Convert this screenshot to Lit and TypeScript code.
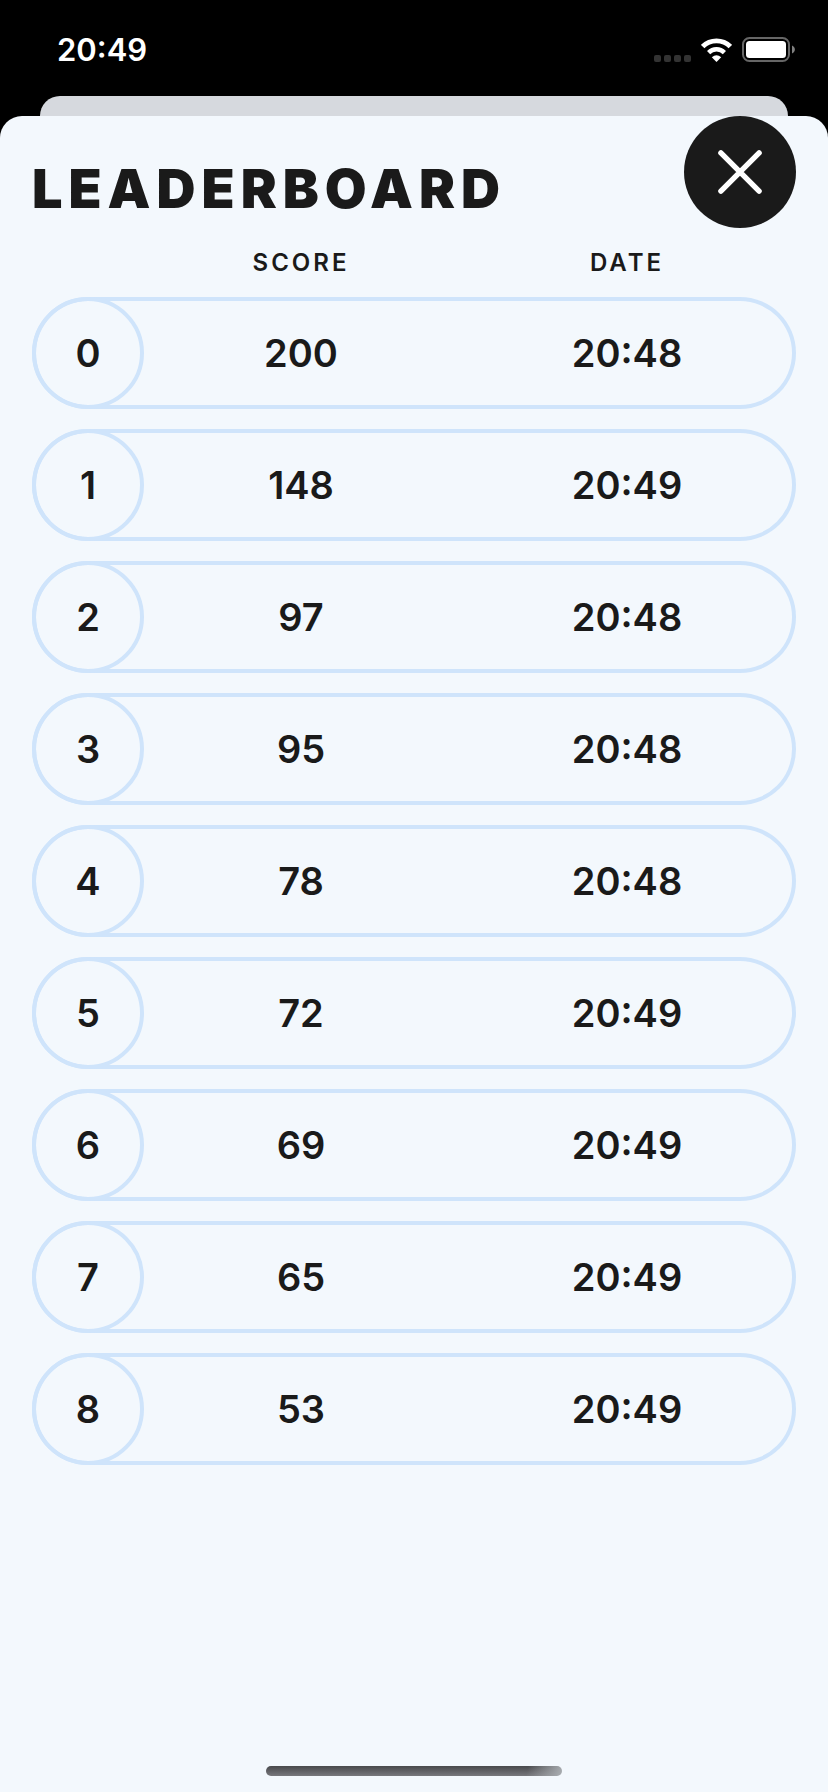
import { LitElement, html, css } from "lit";
import { customElement, state } from "lit/decorators.js";

interface Entry {
  score: number;
  date: string;
}

@customElement("status-bar")
class StatusBar extends LitElement {
  static styles = css`
    :host {
      display: flex;
      align-items: center;
      justify-content: space-between;
      height: 96px;
      padding: 3px 33px 0 57px;
      box-sizing: border-box;
      color: #fff;
    }
    .time {
      font-size: 31px;
      line-height: 40px;
      font-weight: 600;
    }
    .icons {
      display: flex;
      align-items: center;
      gap: 10px;
    }
    svg {
      display: block;
    }
  `;

  render() {
    return html`
      <time class="time">20:49</time>
      <div class="icons">
        <svg width="37" height="24" viewBox="0 0 37 24" fill="#333" aria-hidden="true">
          <rect x="0" y="17" width="7" height="7" rx="2" />
          <rect x="10" y="17" width="7" height="7" rx="2" />
          <rect x="20" y="17" width="7" height="7" rx="2" />
          <rect x="30" y="17" width="7" height="7" rx="2" />
        </svg>
        <svg width="31" height="24" viewBox="0 0 31 24" fill="none" stroke="#fff" aria-hidden="true">
          <path d="M1.7 8.6A19.6 19.6 0 0 1 29.3 8.6" stroke-width="4.9" />
          <path d="M7.6 14.6A11.2 11.2 0 0 1 23.4 14.6" stroke-width="4.5" />
          <path d="M10.8 19.2Q15.5 15.2 20.2 19.2L15.5 24Z" fill="#fff" stroke="none" />
        </svg>
        <svg width="53" height="25" viewBox="0 0 53 25" aria-hidden="true">
          <rect x="1" y="1" width="46" height="23" rx="6.5" fill="none" stroke="#666" stroke-width="2" />
          <rect x="4" y="4" width="40" height="17" rx="3.5" fill="#fff" />
          <path d="M50 8.5C53.8 10 53.8 15 50 16.5Z" fill="#808080" />
        </svg>
      </div>
    `;
  }
}

@customElement("leader-table")
class LeaderTable extends LitElement {
  static properties = { entries: { attribute: false } };
  declare entries: Entry[];

  constructor() {
    super();
    this.entries = [];
  }

  static styles = css`
    :host {
      display: block;
    }
    .table,
    .body {
      display: flex;
      flex-direction: column;
      gap: 20px;
    }
    .row {
      display: grid;
      grid-template-columns: 106px 1fr 1fr;
      align-items: center;
      padding-right: 6px;
    }
    .label {
      padding: 0;
      font-size: 24px;
      line-height: 28px;
      font-weight: 600;
      letter-spacing: 3px;
      text-align: center;
    }
    .entry {
      border-radius: 56px;
      box-shadow: inset 0 0 0 4px #cfe4fb;
      font-size: 38px;
      line-height: 48px;
      font-weight: 600;
    }
    .cell {
      padding: 0;
      text-align: center;
    }
    .rank {
      display: grid;
      place-items: center;
      box-sizing: border-box;
      width: 112px;
      height: 112px;
      padding: 0;
      border: 4px solid #cfe4fb;
      border-radius: 50%;
      font-weight: 600;
    }
  `;

  render() {
    return html`
      <table class="table">
        <thead>
          <tr class="row">
            <td></td>
            <th class="label" scope="col">SCORE</th>
            <th class="label" scope="col">DATE</th>
          </tr>
        </thead>
        <tbody class="body">
          ${this.entries.map(
            (entry, index) => html`
              <tr class="row entry">
                <th class="rank" scope="row">${index}</th>
                <td class="cell">${entry.score}</td>
                <td class="cell">${entry.date}</td>
              </tr>
            `,
          )}
        </tbody>
      </table>
    `;
  }
}

@customElement("app-root")
class AppRoot extends LitElement {
  static styles = css`
    :host {
      display: flex;
      flex-direction: column;
      min-height: 100vh;
      background: #000;
      color: #1a1a1a;
      font-family: Inter, "Liberation Sans", sans-serif;
    }
    .behind {
      height: 20px;
      margin: 0 40px;
      border-radius: 20px 20px 0 0;
      background: #d6d9de;
    }
    .sheet {
      flex: 1;
      display: flex;
      flex-direction: column;
      padding: 0 32px 16px;
      border-radius: 22px 22px 0 0;
      background: #f3f8fd;
    }
    .header {
      display: flex;
      align-items: flex-start;
      justify-content: space-between;
      margin-bottom: 21px;
    }
    .title {
      margin: 0;
      padding-top: 41px;
      font-size: 54px;
      line-height: 64px;
      font-weight: 900;
      letter-spacing: 6px;
    }
    .close {
      display: grid;
      place-items: center;
      width: 112px;
      height: 112px;
      padding: 0;
      border: 0;
      border-radius: 50%;
      background: #1a1a1a;
      cursor: pointer;
    }
    .home {
      width: 296px;
      height: 10px;
      margin: auto auto 0;
      border-radius: 5px;
      background: linear-gradient(100deg, transparent 88%, #a9adb1 100%),
        linear-gradient(#48494c, #77777c);
    }
  `;

  @state()
  private entries: Entry[] = [
    { score: 200, date: "20:48" },
    { score: 148, date: "20:49" },
    { score: 97, date: "20:48" },
    { score: 95, date: "20:48" },
    { score: 78, date: "20:48" },
    { score: 72, date: "20:49" },
    { score: 69, date: "20:49" },
    { score: 65, date: "20:49" },
    { score: 53, date: "20:49" },
  ];

  render() {
    return html`
      <status-bar></status-bar>
      <div class="behind"></div>
      <main class="sheet">
        <header class="header">
          <h1 class="title">LEADERBOARD</h1>
          <button class="close" type="button" aria-label="Close">
            <svg width="44" height="44" viewBox="0 0 44 44" fill="none" stroke="#fff" stroke-width="5.4" stroke-linecap="round" aria-hidden="true">
              <path d="M2.9 2.9L41.1 41.1M41.1 2.9L2.9 41.1" />
            </svg>
          </button>
        </header>
        <leader-table .entries=${this.entries}></leader-table>
        <div class="home"></div>
      </main>
    `;
  }
}
